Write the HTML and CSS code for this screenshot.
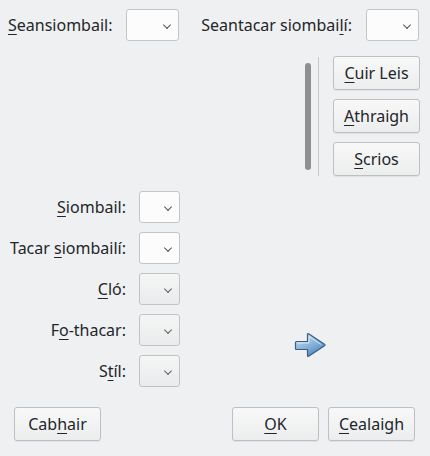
FILE: index.html
```html
<!DOCTYPE html>
<html>
<head>
<meta charset="utf-8">
<link rel="stylesheet" href="styles.css">
</head>
<body>
<div class="dialog">
  <div class="top-row">
    <div class="group">
      <span class="label"><u>S</u>eansiombail:</span>
      <span class="combo wide"><span class="chev"></span></span>
    </div>
    <div class="group">
      <span class="label">Seantacar siombai<u>l</u>í:</span>
      <span class="combo wide"><span class="chev"></span></span>
    </div>
  </div>

  <div class="list-row">
    <div class="scrollbar"></div>
    <div class="vsep"></div>
    <div class="btn-col">
      <button class="btn"><u>C</u>uir Leis</button>
      <button class="btn"><u>A</u>thraigh</button>
      <button class="btn"><u>S</u>crios</button>
    </div>
  </div>

  <div class="lower">
    <div class="form">
      <span class="label right"><u>S</u>iombail:</span>
      <span class="combo"><span class="chev"></span></span>
      <span class="label right">Tacar <u>s</u>iombailí:</span>
      <span class="combo"><span class="chev"></span></span>
      <span class="label right"><u>C</u>ló:</span>
      <span class="combo disabled"><span class="chev"></span></span>
      <span class="label right">F<u>o</u>-thacar:</span>
      <span class="combo disabled"><span class="chev"></span></span>
      <span class="label right">S<u>t</u>íl:</span>
      <span class="combo disabled"><span class="chev"></span></span>
    </div>
    <div class="arrow">
      <svg width="32" height="26" viewBox="0 0 32 26">
        <defs>
          <linearGradient id="ag" x1="0" y1="0" x2="0.6" y2="1">
            <stop offset="0" stop-color="#d3e6f6"/>
            <stop offset="0.5" stop-color="#93bbe0"/>
            <stop offset="1" stop-color="#5489bd"/>
          </linearGradient>
        </defs>
        <path d="M1.5,10.5 Q1.5,9.5 2.5,9.5 H13.5 V2.5 Q13.5,1 15,2 L30.5,12.2 Q31.5,13 30.5,13.8 L15,24 Q13.5,25 13.5,23.5 V17.5 H2.5 Q1.5,17.5 1.5,16.5 Z" fill="url(#ag)" stroke="#3d5d7e" stroke-width="1.2" stroke-linejoin="round"/>
        <path d="M3,11 H15 V4.5 L27,12.5" fill="none" stroke="#eef6fc" stroke-opacity="0.7" stroke-width="1"/>
      </svg>
    </div>
  </div>

  <div class="bottom-row">
    <button class="btn">Cab<u>h</u>air</button>
    <div class="right-btns">
      <button class="btn"><u>O</u>K</button>
      <button class="btn"><u>C</u>ealaigh</button>
    </div>
  </div>
</div>
</body>
</html>
```

FILE: styles.css
```css
html, body {
  margin: 0;
  padding: 0;
  background: #eff0f1;
}
body {
  width: 430px;
  height: 456px;
  overflow: hidden;
  font-family: "Noto Sans", "DejaVu Sans", sans-serif;
  font-size: 16px;
  color: #232629;
}
u {
  text-decoration: underline;
  text-decoration-thickness: 1px;
  text-underline-offset: 3px;
}
.dialog {
  display: flex;
  flex-direction: column;
}
.top-row {
  display: flex;
  justify-content: space-between;
  align-items: center;
  margin-top: 9px;
  padding: 0 11px 0 8px;
}
.group {
  display: flex;
  align-items: center;
  gap: 14px;
}
.label {
  white-space: nowrap;
  line-height: 20px;
}
.combo {
  position: relative;
  box-sizing: border-box;
  width: 41px;
  height: 32px;
  border: 1px solid #c3c5c7;
  border-radius: 3px;
  background: #fcfcfc;
  display: block;
}
.combo.wide {
  width: 53px;
}
.combo.disabled {
  background: linear-gradient(#f4f5f5, #eaebec);
  border-color: #c1c3c5;
}
.chev {
  position: absolute;
  right: 8px;
  top: 12px;
  width: 5px;
  height: 5px;
  border-right: 1.2px solid #4d4f52;
  border-bottom: 1.2px solid #4d4f52;
  transform: rotate(45deg) scale(0.95, 0.95);
  transform-origin: center;
}
.combo.disabled .chev {
  border-color: #5a5c5f;
}
.list-row {
  display: flex;
  justify-content: flex-end;
  margin-top: 15px;
  padding-right: 10px;
  height: 121px;
}
.scrollbar {
  width: 6px;
  height: 107px;
  margin-top: 7px;
  border-radius: 3px;
  background: #8d8f91;
}
.vsep {
  width: 1px;
  height: 119px;
  margin: 1px 0 0 7px;
  background: #c6c8ca;
}
.btn-col {
  display: flex;
  flex-direction: column;
  gap: 9px;
  margin-left: 14px;
}
.btn {
  box-sizing: border-box;
  width: 87px;
  height: 34px;
  padding: 0;
  border: 1px solid #bdbfc1;
  border-radius: 3px;
  background: linear-gradient(#f8f8f9, #eceded);
  font-family: inherit;
  font-size: 16px;
  color: #232629;
  box-shadow: 0 1px 0 rgba(0,0,0,0.06);
}
.lower {
  display: flex;
  margin-top: 14px;
}
.form {
  display: grid;
  grid-template-columns: 126px 41px;
  column-gap: 13px;
  row-gap: 9px;
  align-items: center;
}
.label.right {
  text-align: right;
}
.arrow {
  margin-left: 114px;
  margin-top: 141px;
  width: 32px;
  height: 26px;
}
.arrow svg {
  display: block;
}
.bottom-row {
  display: flex;
  justify-content: space-between;
  margin-top: 20px;
  padding: 0 15px 0 14px;
}
.right-btns {
  display: flex;
  gap: 9px;
}
```
